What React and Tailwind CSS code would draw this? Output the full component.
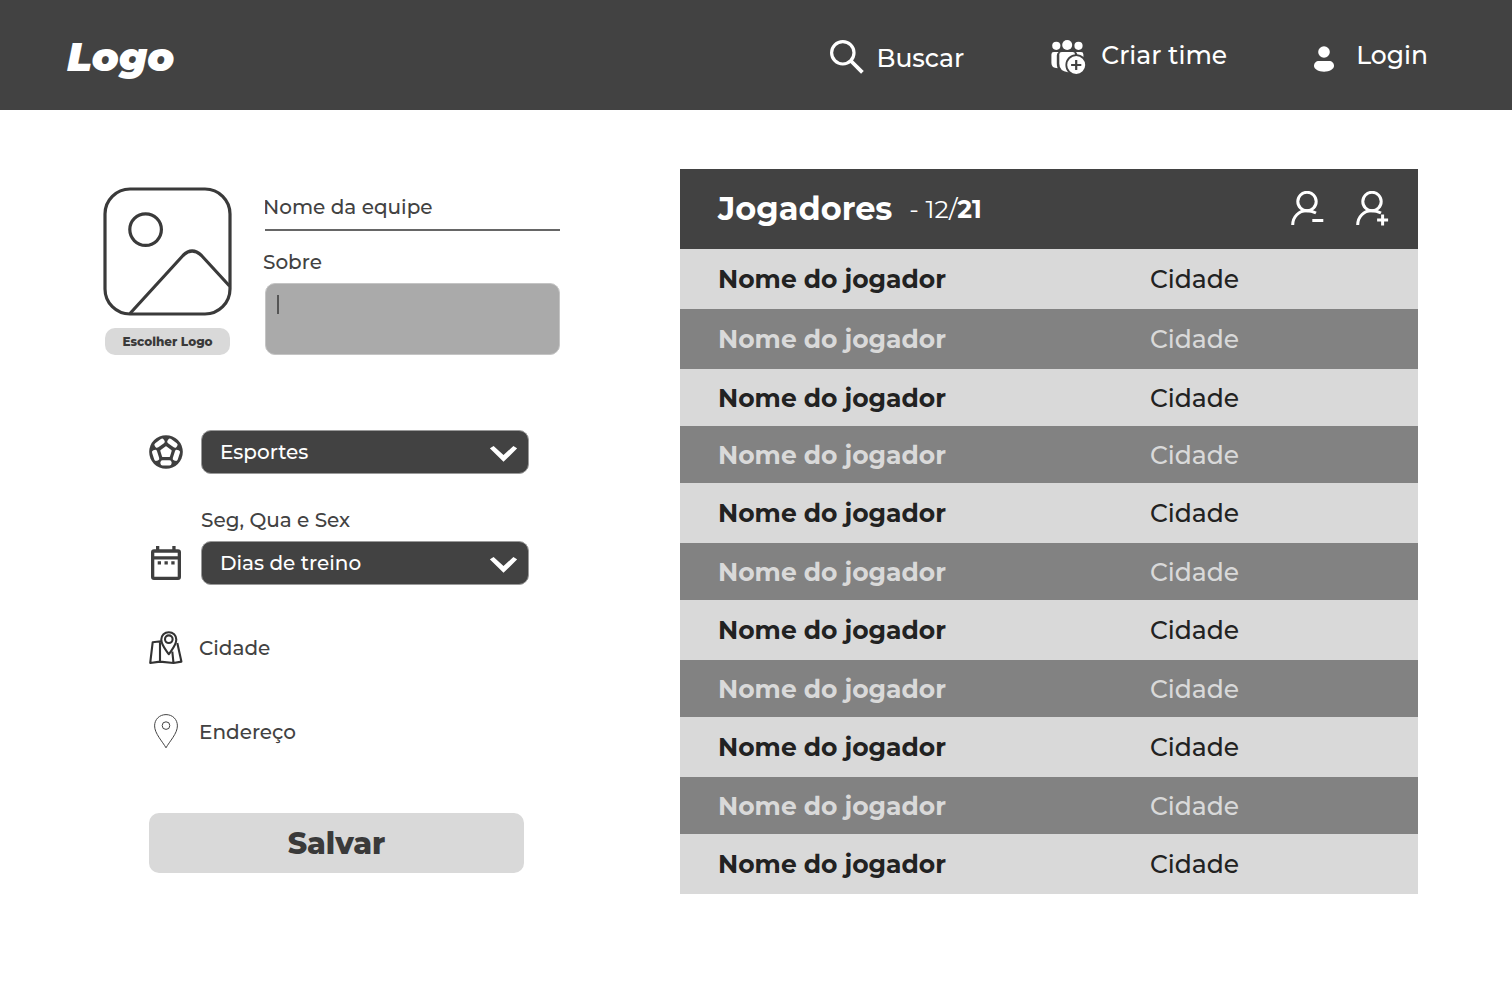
import React from "react";

const PLAYERS = Array.from({ length: 11 }, (_, i) => ({
  id: i + 1,
  name: "Nome do jogador",
  city: "Cidade",
}));

function SearchIcon() {
  return (
    <svg className="mb-0.5" width="34" height="34" viewBox="0 0 34 34" fill="none" stroke="currentColor" aria-hidden="true">
      <circle cx="12.8" cy="12.8" r="11.2" strokeWidth="3.2" />
      <path d="M21 21L32.4 32.4" strokeWidth="3.8" />
    </svg>
  );
}

function TeamIcon() {
  return (
    <svg className="mt-1" width="35" height="35" viewBox="0 0 35 35" fill="currentColor" aria-hidden="true">
      <circle cx="5.3" cy="5.8" r="4.1" />
      <circle cx="16.2" cy="5" r="5" />
      <circle cx="27.5" cy="5.8" r="4.1" />
      <path d="M7.6 12H2.8Q.4 12 .4 14.4V23Q.4 28.2 6.6 28.2Q5.8 26.4 5.8 23.6V15.4Q5.8 13.4 7.6 12Z" />
      <path d="M10.8 12H21.6Q24 12 24 14.4V32.3H17Q8.3 31.4 8.3 23.6V14.4Q8.3 12 10.8 12Z" />
      <path d="M25 12H30Q32.4 12 32.4 14.4V22H26.4V15.4Q26.4 13.4 25 12Z" />
      <circle cx="25.2" cy="25" r="9.9" stroke="#424242" strokeWidth="1.8" />
      <path d="M25.2 19.900V30.100M20.100 25H30.300" stroke="#424242" strokeWidth="2.2" />
    </svg>
  );
}

function UserIcon() {
  return (
    <svg className="mt-2" width="20" height="26" viewBox="0 0 20 26" fill="currentColor" aria-hidden="true">
      <circle cx="10" cy="6" r="5.8" />
      <path d="M5 15H15C18 15 20 17 20 20C20 23 15.500 25.700 10 25.700C4.500 25.700 0 23 0 20C0 17 2 15 5 15Z" />
    </svg>
  );
}

function PictureIcon() {
  return (
    <svg width="129" height="129" viewBox="0 0 129 129" fill="none" stroke="#3a3a3a" strokeWidth="3.2" aria-hidden="true">
      <rect x="2" y="2" width="125" height="125" rx="25" />
      <circle cx="42.600" cy="42.600" r="15.800" />
      <path d="M27 126.500L80 68.500Q89 59.500 98.500 68.500L126.500 99" />
    </svg>
  );
}

function ChevronIcon() {
  return (
    <svg className="pointer-events-none absolute top-1/2 right-3 -translate-y-1/2" width="27" height="20" viewBox="0 0 27 20" fill="#fff" aria-hidden="true">
      <path d="M3.600 4L13.500 13L23.400 4L27.200 6.400L13.500 19.800L-.2 6.400Z" />
    </svg>
  );
}

function BallIcon() {
  return (
    <svg width="34" height="34" viewBox="0 0 34 34" fill="#fff" aria-hidden="true">
      <circle cx="17" cy="17" r="16.800" fill="#3f3f3f" />
      <path d="M17 12.200L21.700 15.700L20 21.100H14L12.300 15.700Z" stroke="#fff" strokeWidth="2" strokeLinejoin="round" />
      {[0, 72, 144, 216, 288].map((angle) => (
        <rect key={angle} transform={`rotate(${angle} 17 17)`} x="11.500" y="25.300" width="11" height="5.200" rx="2" />
      ))}
    </svg>
  );
}

function CalendarIcon() {
  return (
    <svg width="34" height="34" viewBox="0 0 34 34" fill="#3f3f3f" aria-hidden="true">
      <path
        fillRule="evenodd"
        d="M7 0H10.300V3.300H23.300V0H26.600V3.300H29Q32 3.300 32 6.300V31Q32 34 29 34H5Q2 34 2 31V6.300Q2 3.300 5 3.300H7ZM5.300 6.800V10.200H28.700V6.800ZM5.300 13.500V30.700H28.700V13.500Z"
      />
      <path d="M8.700 15.300H12V18.600H8.700ZM15.500 15.300H18.800V18.600H15.500ZM22.300 15.300H25.600V18.600H22.300Z" />
    </svg>
  );
}

function MapIcon() {
  return (
    <svg width="34" height="34" viewBox="0 0 34 34" fill="none" stroke="#333" strokeWidth="2.1" strokeLinejoin="round" aria-hidden="true">
      <path d="M12 10.200L3.700 11.200L1.200 32L11 30.600L24.500 32L32.400 30.600L28.300 12M11 10.400V30.600M23.300 20.500L24.500 32" />
      <path d="M19.800 23.200C17 19 12.300 14.500 12.300 8.600C12.300 4.200 15.600 1.200 19.800 1.200C24 1.200 27.300 4.200 27.300 8.600C27.300 14.500 22.600 19 19.800 23.200Z" />
      <circle cx="19.800" cy="8.200" r="3.800" />
    </svg>
  );
}

function PinIcon() {
  return (
    <svg width="34" height="34" viewBox="0 1 34 34" fill="none" stroke="#444" strokeWidth="1" overflow="visible" aria-hidden="true">
      <path d="M17 33.800C13.500 27.500 5.600 19.500 5.600 11.900C5.600 5.300 10.500 .6 17 .6C23.500 .6 28.400 5.300 28.400 11.900C28.400 19.500 20.500 27.500 17 33.800Z" />
      <circle cx="17" cy="11.600" r="3.800" />
    </svg>
  );
}

function PlayerIcon({ add }) {
  return (
    <svg width="34" height="36" viewBox="0 0 34 36" fill="none" stroke="currentColor" strokeWidth="3" aria-hidden="true">
      <circle cx="16" cy="10.500" r="9.200" />
      <path d="M1.700 34C1.700 25.500 8 19.800 15.500 19.800C19 19.800 22 20.500 25 22" />
      {add ? <path d="M26.600 23.500V34.500M21.100 29H32.100" /> : <path d="M21.300 29.500H32.300" />}
    </svg>
  );
}

function Dropdown({ label }) {
  return (
    <div className="relative">
      <select
        aria-label={label}
        className="h-11 w-full appearance-none rounded-[10px] border border-[#9a9a9a] bg-[#424242] pr-12 pl-[18px] text-xl font-medium text-white"
      >
        <option>{label}</option>
      </select>
      <ChevronIcon />
    </div>
  );
}

function Header() {
  return (
    <header className="flex h-[110px] items-center justify-between bg-[#424242] pr-[84px] pl-[67px] text-white">
      <a href="#inicio" className="pt-1 text-[40px] leading-none font-black italic">Logo</a>
      <nav className="flex items-center gap-[87px] text-[25px] leading-8 font-medium">
        <a href="#buscar" className="flex items-center gap-3 pt-1.5">
          <SearchIcon />
          Buscar
        </a>
        <a href="#criar-time" className="flex items-center gap-[15px]">
          <TeamIcon />
          Criar time
        </a>
        <a href="#login" className="flex items-center gap-[22px]">
          <UserIcon />
          Login
        </a>
      </nav>
    </header>
  );
}

function TeamForm() {
  return (
    <form className="w-[457px] shrink-0 pt-[18px] text-xl font-medium text-[#424242]" onSubmit={(e) => e.preventDefault()}>
      <div className="flex gap-[33px]">
        <div className="flex flex-col items-center gap-3">
          <PictureIcon />
          <button type="button" className="h-[27px] w-[125px] rounded-[10px] bg-[#d9d9d9] text-xs font-extrabold text-[#3a3a3a]">
            Escolher Logo
          </button>
        </div>
        <div className="flex flex-1 flex-col">
          <input
            type="text"
            aria-label="Nome da equipe"
            placeholder="Nome da equipe"
            className="h-11 border-b-2 border-[#666] pb-0.5 -indent-0.5 placeholder:text-[#424242] placeholder:opacity-100 focus:outline-none"
          />
          <label htmlFor="sobre" className="mt-[17px] -indent-0.5 leading-7">Sobre</label>
          <div className="relative mt-[7px] h-[72px]">
            <textarea
              id="sobre"
              className="block h-full w-full resize-none rounded-[10px] border border-[#c4c4c4] bg-[#aaa] px-3 py-2 focus:outline-none"
            />
            <span className="pointer-events-none absolute top-3 left-3 h-[19px] w-0.5 bg-[#555]" />
          </div>
        </div>
      </div>

      <div className="mt-[75px] ml-[46px] grid w-[380px] grid-cols-[34px_1fr] items-center gap-x-[18px]">
        <BallIcon />
        <Dropdown label="Esportes" />
        <p className="col-start-2 mt-[31px] mb-[5px] leading-[31px]">Seg, Qua e Sex</p>
        <CalendarIcon />
        <Dropdown label="Dias de treino" />
      </div>

      <div className="mt-[41px] ml-[46px] grid grid-cols-[34px_1fr] items-center gap-x-4 gap-y-10">
        <MapIcon />
        <input
          type="text"
          aria-label="Cidade"
          placeholder="Cidade"
          className="h-11 placeholder:text-[#424242] placeholder:opacity-100 focus:outline-none"
        />
        <PinIcon />
        <input
          type="text"
          aria-label="Endereço"
          placeholder="Endereço"
          className="h-11 placeholder:text-[#424242] placeholder:opacity-100 focus:outline-none"
        />
      </div>

      <button type="submit" className="mt-[59px] ml-[46px] h-[60px] w-[375px] rounded-[10px] bg-[#d9d9d9] pt-0.5 text-[30px] font-extrabold text-[#3a3a3a]">
        Salvar
      </button>
    </form>
  );
}

function PlayersPanel() {
  return (
    <section className="min-w-0 flex-1">
      <div className="flex h-20 items-center justify-between bg-[#424242] pr-7 pl-[38px] text-white">
        <div className="flex items-center gap-[17px]">
          <h2 className="text-[32px] leading-10 font-bold">Jogadores</h2>
          <p className="text-[25px] leading-8">
            - 12/<b>21</b>
          </p>
        </div>
        <div className="flex items-center gap-[31px]">
          <button type="button" aria-label="Remover jogador">
            <PlayerIcon />
          </button>
          <button type="button" aria-label="Adicionar jogador">
            <PlayerIcon add />
          </button>
        </div>
      </div>
      <table className="w-full table-fixed border-collapse text-left text-[25px] leading-8 font-medium">
        <tbody>
          {PLAYERS.map((player) => (
            <tr
              key={player.id}
              className="h-[57px] bg-[#d9d9d9] text-[#222] odd:h-[60px] even:bg-[#828282] even:text-[#d9d9d9] nth-2:h-[60px] nth-3:h-[57px]"
            >
              <th scope="row" className="w-[63%] py-0 pl-[38px] font-bold">{player.name}</th>
              <td className="py-0 pl-[5px]">{player.city}</td>
            </tr>
          ))}
        </tbody>
      </table>
    </section>
  );
}

export default function App() {
  return (
    <div className="min-h-screen bg-white font-['Montserrat','Inter',sans-serif]">
      <Header />
      <main className="flex items-start gap-[120px] pt-[59px] pr-[94px] pb-[88px] pl-[103px]">
        <TeamForm />
        <PlayersPanel />
      </main>
    </div>
  );
}
